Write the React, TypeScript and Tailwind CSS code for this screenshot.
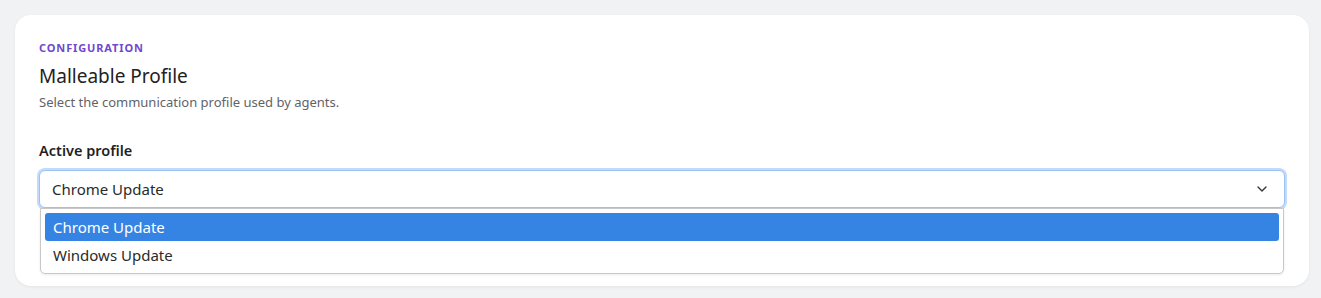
import { ChevronDown } from 'lucide-react';

const options = ['Chrome Update', 'Windows Update'];

export default function App() {
  return (
    <div
      className="min-h-[298px] bg-[#f1f2f4] pt-[15px] pb-[12px] pl-[15px] pr-[12px]"
      style={{ fontFamily: '"Noto Sans", "Open Sans", sans-serif' }}
    >
      <div className="rounded-2xl bg-white px-6 pt-[26px] pb-[78px] shadow-[0_1px_3px_rgba(0,0,0,0.06)]">
        <div className="text-[11px] font-bold uppercase tracking-[0.08em] leading-[14px] text-[#7048d0]">
          Configuration
        </div>
        <h2 className="mt-[8px] text-[19px] leading-[26px] text-[#222]">Malleable Profile</h2>
        <p className="mt-[4px] text-[13px] leading-[18px] text-[#5f6368]">
          Select the communication profile used by agents.
        </p>

        <label className="mt-[29px] block text-[14.5px] font-semibold leading-[20px] text-[#1f1f1f]">
          Active profile
        </label>

        <div className="relative mt-[10px]">
          <div className="flex h-[38px] items-center justify-between rounded-md border border-[#9cc3f5] bg-white pl-3 pr-[14px] ring-2 ring-[#c3dafb]">
            <span className="text-[15px] text-[#2a2a2a]">Chrome Update</span>
            <ChevronDown className="h-4 w-4 text-[#333]" strokeWidth={2} />
          </div>

          <div className="absolute left-[1px] right-[1px] top-[38px] rounded-b-[5px] border border-[#c8c8c8] bg-white p-[4px] shadow-[0_1px_3px_rgba(0,0,0,0.08)]">
            {options.map((o, i) => (
              <div
                key={o}
                className={
                  i === 0
                    ? 'flex h-[28px] items-center rounded-[3px] bg-[#3584e4] px-2 text-[15px] text-white'
                    : 'flex h-[28px] items-center px-2 text-[15px] text-[#2a2a2a]'
                }
              >
                {o}
              </div>
            ))}
          </div>
        </div>
      </div>
    </div>
  );
}
